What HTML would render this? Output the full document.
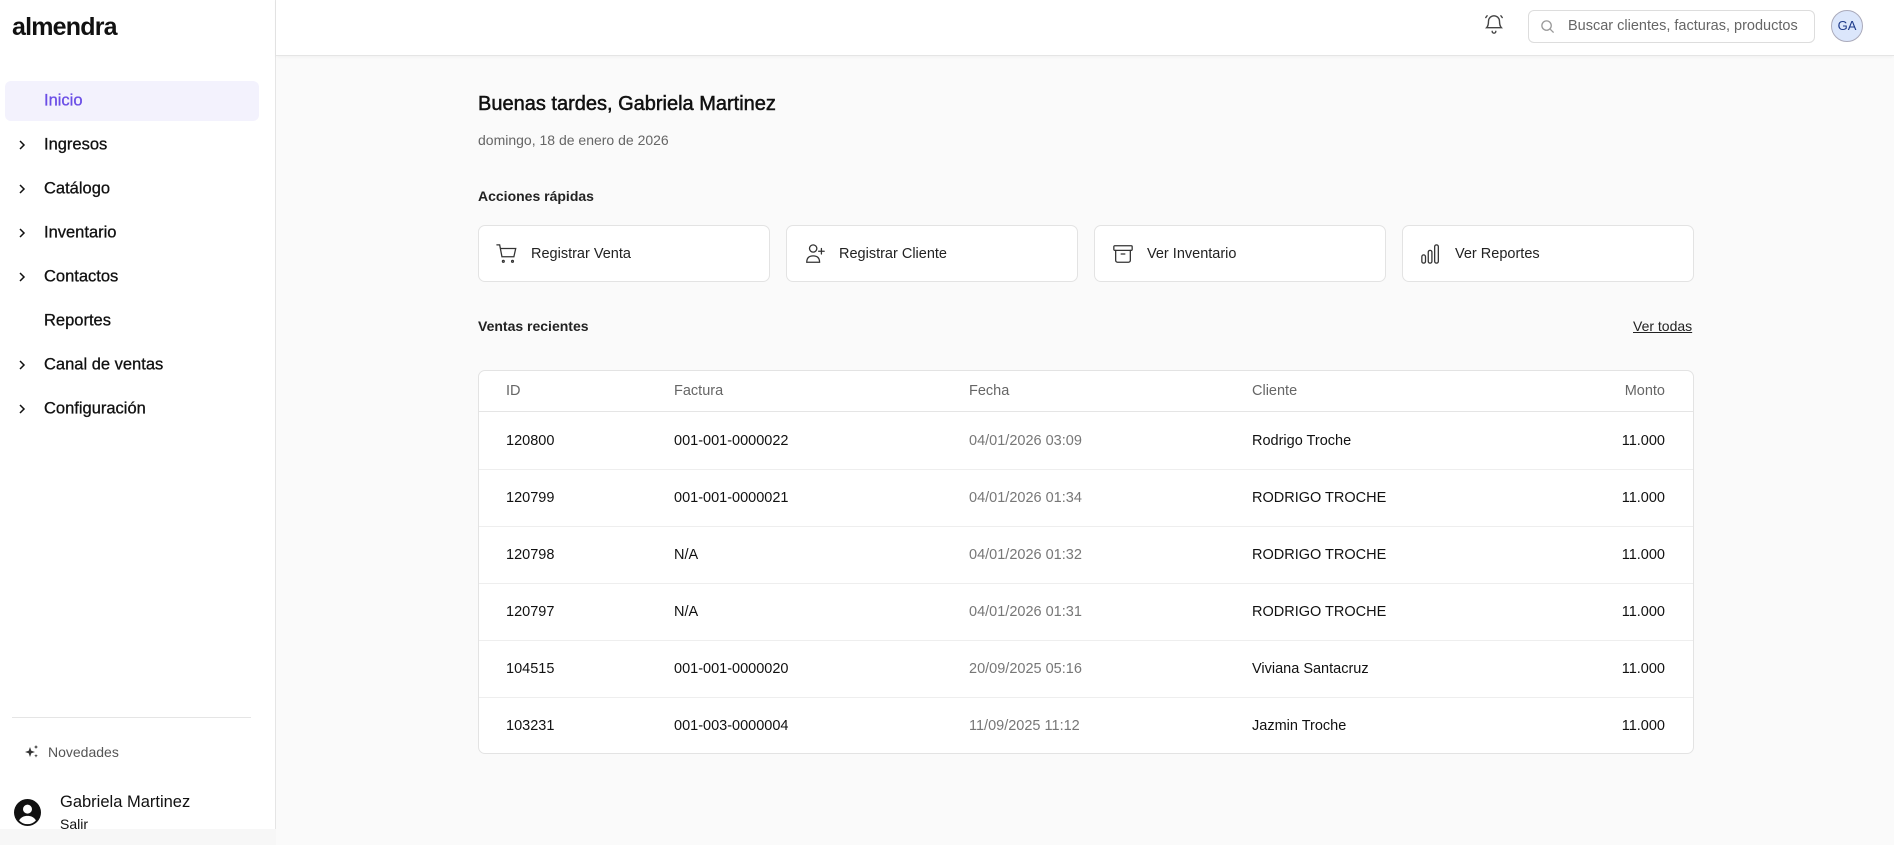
<!DOCTYPE html>
<html><head><meta charset="utf-8"><style>
*{box-sizing:border-box;margin:0;padding:0}
body{width:1894px;height:845px;overflow:hidden;background:#fafafa;font-family:"Liberation Sans",Arial,sans-serif;color:#111;position:relative}
.abs{position:absolute}
.side{left:0;top:0;width:276px;height:845px;background:#fff;border-right:1px solid #e5e5e5}
.logo{left:12px;top:13px;font-size:25px;font-weight:bold;letter-spacing:-0.8px;color:#111}
.nav{left:44px;font-size:16.5px;color:#111;transform:translateY(-50%);-webkit-text-stroke:0.3px #111}
.chev{left:16px;transform:translateY(-50%)}
.hdr{left:276px;top:0;width:1618px;height:56px;background:#fff;border-bottom:1px solid #e5e5e5;box-shadow:0 1px 3px rgba(0,0,0,.04)}
.card{top:225px;width:292px;height:57px;background:#fff;border:1px solid #e3e3e3;border-radius:7px}
.card svg{position:absolute;left:17px;top:17px}
.card span{position:absolute;left:52px;top:20px;font-size:14.5px;color:#222}
.tbl{left:478px;top:370px;width:1216px;height:384px;background:#fff;border:1px solid #e3e3e3;border-radius:7px;overflow:hidden}
.row{position:absolute;left:0;width:100%;height:57px;border-top:1px solid #eee;font-size:14.5px}
.row div{position:absolute;top:50%;transform:translateY(-50%)}
.c1{left:27px}.c2{left:195px}.c3{left:490px;color:#777}.c4{left:773px}.c5{right:28px}
.th{color:#666}
</style></head><body>
<div class="abs side"></div>
<div class="abs logo">almendra</div>
<div class="abs" style="left:5px;top:81px;width:254px;height:40px;background:#f3f2fd;border-radius:6px"></div>
<div class="abs nav" style="top:101px;color:#6b4ee6;-webkit-text-stroke:0.3px #6b4ee6">Inicio</div>
<svg class="abs chev" style="top:145px" width="12" height="12" viewBox="0 0 12 12"><path d="M4 2l4 4-4 4" fill="none" stroke="#111" stroke-width="1.5"/></svg>
<div class="abs nav" style="top:145px">Ingresos</div>
<svg class="abs chev" style="top:189px" width="12" height="12" viewBox="0 0 12 12"><path d="M4 2l4 4-4 4" fill="none" stroke="#111" stroke-width="1.5"/></svg>
<div class="abs nav" style="top:189px">Catálogo</div>
<svg class="abs chev" style="top:233px" width="12" height="12" viewBox="0 0 12 12"><path d="M4 2l4 4-4 4" fill="none" stroke="#111" stroke-width="1.5"/></svg>
<div class="abs nav" style="top:233px">Inventario</div>
<svg class="abs chev" style="top:277px" width="12" height="12" viewBox="0 0 12 12"><path d="M4 2l4 4-4 4" fill="none" stroke="#111" stroke-width="1.5"/></svg>
<div class="abs nav" style="top:277px">Contactos</div>
<div class="abs nav" style="top:321px">Reportes</div>
<svg class="abs chev" style="top:365px" width="12" height="12" viewBox="0 0 12 12"><path d="M4 2l4 4-4 4" fill="none" stroke="#111" stroke-width="1.5"/></svg>
<div class="abs nav" style="top:365px">Canal de ventas</div>
<svg class="abs chev" style="top:409px" width="12" height="12" viewBox="0 0 12 12"><path d="M4 2l4 4-4 4" fill="none" stroke="#111" stroke-width="1.5"/></svg>
<div class="abs nav" style="top:409px">Configuración</div>
<div class="abs" style="left:12px;top:717px;width:239px;height:1px;background:#e5e5e5"></div>
<svg class="abs" style="left:25px;top:745px" width="14" height="14" viewBox="0 0 14 14"><path d="M5 2l1.3 3.7L10 7 6.3 8.3 5 12 3.7 8.3 0 7l3.7-1.3z" fill="#333"/><path d="M11 0l.6 1.4L13 2l-1.4.6L11 4l-.6-1.4L9 2l1.4-.6zM11 9l.5 1.3 1.3.5-1.3.5L11 12.6l-.5-1.3-1.3-.5 1.3-.5z" fill="#333"/></svg>
<div class="abs" style="left:48px;top:744px;font-size:14px;color:#555">Novedades</div>
<svg class="abs" style="left:14px;top:799px" width="27" height="27" viewBox="0 0 24 24"><circle cx="12" cy="12" r="12" fill="#111"/><circle cx="12" cy="9" r="4" fill="#fff"/><path d="M4.5 19c1.8-3 4.5-4 7.5-4s5.7 1 7.5 4a10 10 0 0 1-15 0z" fill="#fff"/></svg>
<div class="abs" style="left:60px;top:793px;font-size:16.5px">Gabriela Martinez</div>
<div class="abs" style="left:60px;top:816px;font-size:14px">Salir</div>
<div class="abs" style="left:0;top:829px;width:276px;height:16px;background:#f7f7f7"></div>

<div class="abs hdr"></div>
<svg class="abs" style="left:1483px;top:13px" width="22" height="22" viewBox="0 0 24 24" fill="none" stroke="#444" stroke-width="1.5" stroke-linecap="round"><path d="M6 9a6 6 0 0 1 12 0c0 5 2 7 2 7H4s2-2 2-7"/><path d="M10 20a2 2 0 0 0 4 0"/><path d="M3 5l1.5-2M21 5l-1.5-2"/></svg>
<div class="abs" style="left:1528px;top:10px;width:287px;height:33px;border:1px solid #ddd;border-radius:6px;background:#fff"></div>
<svg class="abs" style="left:1540px;top:19px" width="15" height="15" viewBox="0 0 16 16" fill="none" stroke="#999" stroke-width="1.4"><circle cx="7" cy="7" r="5"/><path d="M11 11l3.5 3.5"/></svg>
<div class="abs" style="left:1568px;top:18px;font-size:14.5px;color:#666">Buscar clientes, facturas, productos</div>
<div class="abs" style="left:1831px;top:10px;width:32px;height:32px;border-radius:50%;background:#dbe6fb;border:1px solid #aab;font-size:13px;color:#1d3a8a;text-align:center;line-height:30px">GA</div>

<div class="abs" style="left:478px;top:93px;font-size:20px;color:#111;-webkit-text-stroke:0.5px #111">Buenas tardes, Gabriela Martinez</div>
<div class="abs" style="left:478px;top:132px;font-size:14px;color:#666">domingo, 18 de enero de 2026</div>
<div class="abs" style="left:478px;top:188px;font-size:14px;font-weight:bold;color:#222">Acciones rápidas</div>

<div class="abs card" style="left:478px"><svg width="22" height="22" viewBox="0 0 24 24" fill="none" stroke="#333" stroke-width="1.4" stroke-linecap="round"><path d="M1 2h3l2.5 13h13l2-9H5.5"/><circle cx="8" cy="20" r="1"/><circle cx="18" cy="20" r="1"/></svg><span>Registrar Venta</span></div>
<div class="abs card" style="left:786px"><svg width="22" height="22" viewBox="0 0 24 24" fill="none" stroke="#333" stroke-width="1.4" stroke-linecap="round"><circle cx="10" cy="6" r="4"/><path d="M3 21c0-5 3-7 7-7s7 2 7 7z"/><path d="M19 6v6M16 9h6"/></svg><span>Registrar Cliente</span></div>
<div class="abs card" style="left:1094px"><svg width="22" height="22" viewBox="0 0 24 24" fill="none" stroke="#333" stroke-width="1.4" stroke-linecap="round"><rect x="2" y="3" width="20" height="5" rx="1"/><path d="M4 8v11a2 2 0 0 0 2 2h12a2 2 0 0 0 2-2V8M10 12h4"/></svg><span>Ver Inventario</span></div>
<div class="abs card" style="left:1402px"><svg width="22" height="22" viewBox="0 0 24 24" fill="none" stroke="#333" stroke-width="1.4"><rect x="2" y="13" width="4" height="9" rx="2"/><rect x="9" y="8" width="4" height="14" rx="2"/><rect x="16" y="2" width="4" height="20" rx="2"/></svg><span>Ver Reportes</span></div>

<div class="abs" style="left:478px;top:318px;font-size:14px;font-weight:bold;color:#222">Ventas recientes</div>
<div class="abs" style="left:1633px;top:318px;font-size:14px;color:#222;text-decoration:underline">Ver todas</div>

<div class="abs tbl">
<div class="row th" style="top:-1px;height:42px;border-top:none;border-bottom:1px solid #e5e5e5;"><div class="c1">ID</div><div class="c2">Factura</div><div class="c3" style="color:#666">Fecha</div><div class="c4">Cliente</div><div class="c5">Monto</div></div>
<div class="row" style="top:41px;border-top:none"><div class="c1">120800</div><div class="c2">001-001-0000022</div><div class="c3">04/01/2026 03:09</div><div class="c4">Rodrigo Troche</div><div class="c5">11.000</div></div>
<div class="row" style="top:98px"><div class="c1">120799</div><div class="c2">001-001-0000021</div><div class="c3">04/01/2026 01:34</div><div class="c4">RODRIGO TROCHE</div><div class="c5">11.000</div></div>
<div class="row" style="top:155px"><div class="c1">120798</div><div class="c2">N/A</div><div class="c3">04/01/2026 01:32</div><div class="c4">RODRIGO TROCHE</div><div class="c5">11.000</div></div>
<div class="row" style="top:212px"><div class="c1">120797</div><div class="c2">N/A</div><div class="c3">04/01/2026 01:31</div><div class="c4">RODRIGO TROCHE</div><div class="c5">11.000</div></div>
<div class="row" style="top:269px"><div class="c1">104515</div><div class="c2">001-001-0000020</div><div class="c3">20/09/2025 05:16</div><div class="c4">Viviana Santacruz</div><div class="c5">11.000</div></div>
<div class="row" style="top:326px"><div class="c1">103231</div><div class="c2">001-003-0000004</div><div class="c3">11/09/2025 11:12</div><div class="c4">Jazmin Troche</div><div class="c5">11.000</div></div>
</div>
</body></html>
